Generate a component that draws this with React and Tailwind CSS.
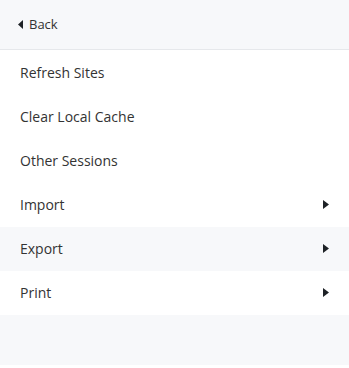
import { useState } from 'react';

const items = [
  { label: 'Refresh Sites' },
  { label: 'Clear Local Cache' },
  { label: 'Other Sessions' },
  { label: 'Import', sub: true },
  { label: 'Export', sub: true },
  { label: 'Print', sub: true },
];

function CaretRight() {
  return (
    <svg width="6" height="9" viewBox="0 0 6 9" className="fill-[#1e2226]">
      <path d="M0 0 L6 4.5 L0 9 Z" />
    </svg>
  );
}

function CaretLeft() {
  return (
    <svg width="5" height="9" viewBox="0 0 5 9" className="fill-[#1e2226]">
      <path d="M5 0 L0 4.5 L5 9 Z" />
    </svg>
  );
}

export default function App() {
  const [hover, setHover] = useState('Export');

  return (
    <div className="w-[349px] h-[368px] bg-white font-['Open_Sans',sans-serif] text-[#333]">
      <div className="h-[50px] bg-[#f7f8fa] border-b border-[#e6e8eb] flex items-center pl-[18px] gap-[6px] text-[13px]">
        <CaretLeft />
        <span>Back</span>
      </div>
      <div className="pt-px">
        {items.map((item) => (
          <div
            key={item.label}
            onMouseEnter={() => setHover(item.label)}
            className={`h-[44px] flex items-center justify-between pl-5 pr-[20px] pb-[2px] text-[14px] ${hover === item.label ? 'bg-[#f7f8fa]' : ''}`}
          >
            <span>{item.label}</span>
            {item.sub && <CaretRight />}
          </div>
        ))}
      </div>
      <div className="h-[50px] bg-[#f7f8fa]" />
    </div>
  );
}
